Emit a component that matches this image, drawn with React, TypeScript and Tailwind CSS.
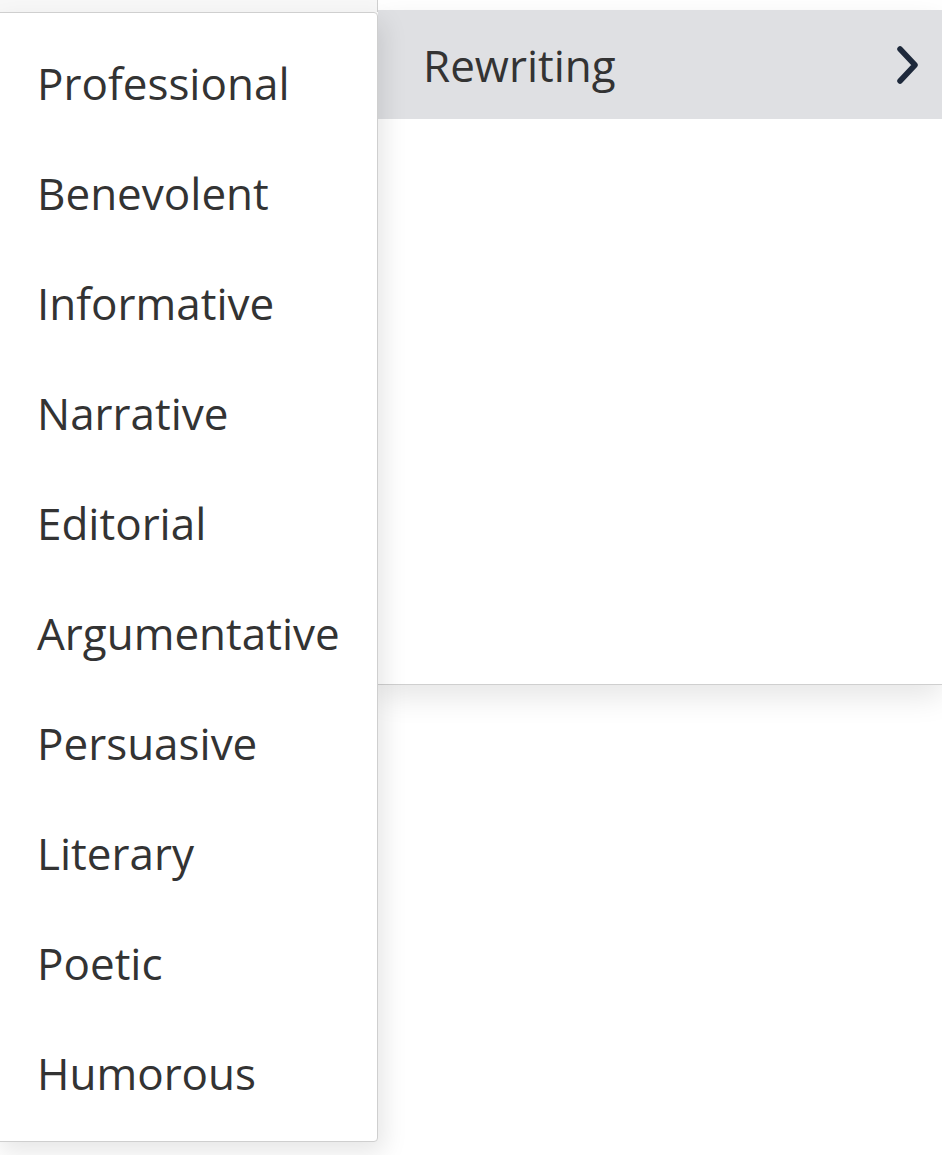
const TONES = [
  "Professional",
  "Benevolent",
  "Informative",
  "Narrative",
  "Editorial",
  "Argumentative",
  "Persuasive",
  "Literary",
  "Poetic",
  "Humorous",
];

export default function App() {
  return (
    <div className="w-[942px] h-[1155px] overflow-hidden bg-white font-['Open_Sans','Noto_Sans',sans-serif] text-[#333333]">
      <div className="flex items-start">
        {/* Tone menu */}
        <div className="relative z-10 flex flex-col w-[378px] shrink-0">
          <div className="h-[12px] bg-[#f7f7f7] border-r border-[#cfcfcf]" />
          <div className="-ml-[6px] rounded-[4px] border border-[#cfcfcf] bg-white pt-[15px] pb-[13px] shadow-[6px_10px_24px_rgba(0,0,0,0.10)]">
            {TONES.map((tone) => (
              <div key={tone} className="flex h-[110px] items-center pl-[42px] text-[44px] leading-none">
                {tone}
              </div>
            ))}
          </div>
        </div>

        {/* Sub menu */}
        <div className="mt-[10px] h-[675px] w-[564px] shrink-0 border-b border-[#cfcfcf] bg-white shadow-[0_12px_28px_rgba(0,0,0,0.10)]">
          <div className="flex h-[109px] items-center justify-between bg-[#dfe0e3] pl-[45px] pr-[22px]">
            <span className="text-[44px] leading-none">Rewriting</span>
            <svg width="24" height="38" viewBox="0 0 24 38" fill="none" aria-hidden="true">
              <path d="M4 3L19 19L4 35" stroke="#1e293b" strokeWidth="5.5" strokeLinecap="round" strokeLinejoin="round" />
            </svg>
          </div>
        </div>
      </div>
    </div>
  );
}
